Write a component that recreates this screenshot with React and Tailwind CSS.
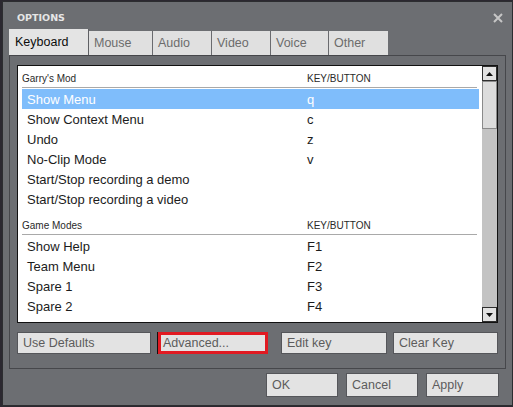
const font = { fontFamily: '"Liberation Sans", Arial, sans-serif' };

const gmodBinds = [
  ['Show Menu', 'q', true],
  ['Show Context Menu', 'c'],
  ['Undo', 'z'],
  ['No-Clip Mode', 'v'],
  ['Start/Stop recording a demo', ''],
  ['Start/Stop recording a video', ''],
];

const modeBinds = [
  ['Show Help', 'F1'],
  ['Team Menu', 'F2'],
  ['Spare 1', 'F3'],
  ['Spare 2', 'F4'],
];

const tabs = [
  ['Mouse', 'w-[64px] border-r'],
  ['Audio', 'w-[59px] border-r'],
  ['Video', 'w-[59px] border-r'],
  ['Voice', 'w-[58px] border-r'],
  ['Other', 'w-[59px]'],
];

const SectionHeader = ({ label }) => (
  <div className="h-[22px] flex items-end pb-[2px] border-b border-[#a9a9a9] mr-[2px] text-[10px] leading-[12px] text-[#2a2a2a]">
    <span className="w-[285px]">{label}</span>
    <span>KEY/BUTTON</span>
  </div>
);

const BindRow = ({ name, keyName, selected }) => (
  <div
    className={`h-[20px] flex items-center pl-[5px] pt-[1px] text-[13px] ${
      selected ? 'bg-[#7fbdfb] text-white' : 'text-[#1c1c1c]'
    }`}
  >
    <span className="w-[280px]">{name}</span>
    <span>{keyName}</span>
  </div>
);

const Arrow = ({ down }) => (
  <svg width="7" height="4" viewBox="0 0 7 4">
    <path d={down ? 'M0 0H7L3.5 4Z' : 'M0 4H7L3.5 0Z'} fill="#111" />
  </svg>
);

const Button = ({ children, className = '' }) => (
  <div
    className={`flex items-center pl-[5px] bg-[#e3e3e3] border border-[#55565a] text-[#5c5c5c] text-[12.5px] ${className}`}
  >
    {children}
  </div>
);

export default function App() {
  return (
    <div className="w-[513px] h-[407px] bg-[#2b2830] overflow-hidden" style={font}>
      <div className="ml-[2px] mt-[1px] w-[511px] h-[405px] border border-[#2c2d30] bg-[#6c6e72] flex flex-col px-[6px]">
        <div className="h-[27px] flex items-start">
          <span
            className="pl-[8px] pt-[10px] text-[9.5px] leading-[11px] font-bold text-[#e6e6e6]"
            style={{ fontFamily: '"DejaVu Sans", sans-serif' }}
          >
            OPTIONS
          </span>
          <svg className="ml-auto mr-[3px] mt-[11px]" width="10" height="10" viewBox="0 0 10 10">
            <path d="M1 1L9 9M9 1L1 9" stroke="#c6c6c6" strokeWidth="2" />
          </svg>
        </div>

        <div className="h-[26px] flex items-end">
          <div className="w-[80px] h-[26px] flex items-center pl-[6px] bg-[#e4e4e4] border-r border-[#5f6064] text-[12.5px] text-[#0c0c0c]">
            Keyboard
          </div>
          {tabs.map(([label, cls]) => (
            <div
              key={label}
              className={`h-[24px] flex items-center pl-[5px] bg-[#e0e0e0] border-[#6a6b6f] text-[12.5px] text-[#6c6c6c] ${cls}`}
            >
              {label}
            </div>
          ))}
        </div>

        <div className="h-[314px] border border-[#46474b] px-[7px] pt-[9px] flex flex-col">
          <div className="h-[258px] border border-[#111] bg-white flex">
            <div className="flex-1 overflow-hidden pl-[4px] pr-[3px]">
              <SectionHeader label="Garry's Mod" />
              <div className="pt-[1px]">
                {gmodBinds.map(([name, k, sel]) => (
                  <BindRow key={name} name={name} keyName={k} selected={sel} />
                ))}
              </div>
              <div className="mt-[4px]">
                <SectionHeader label="Game Modes" />
                <div className="pt-[1px]">
                  {modeBinds.map(([name, k]) => (
                    <BindRow key={name} name={name} keyName={k} />
                  ))}
                </div>
              </div>
            </div>
            <div className="w-[15px] bg-[#c3c3c3] flex flex-col">
              <div className="h-[15px] bg-[#e1e1e1] border border-[#2e2e2e] flex items-center justify-center">
                <Arrow />
              </div>
              <div className="h-[48px] bg-[#dcdcdc] border border-[#8a8a8a]" />
              <div className="mt-auto h-[15px] bg-[#e1e1e1] border border-[#2e2e2e] flex items-center justify-center">
                <Arrow down />
              </div>
            </div>
          </div>

          <div className="mt-[9px] flex h-[22px]">
            <Button className="w-[134px]">Use Defaults</Button>
            <div className="ml-[6px] w-[111px] border-l border-[#111] flex">
              <div className="flex-1 flex items-center pl-[2px] bg-[#e3e3e3] border-[3px] border-[#e11a22] text-[#5c5c5c] text-[12.5px]">
                Advanced...
              </div>
            </div>
            <Button className="ml-[13px] w-[106px]">Edit key</Button>
            <Button className="ml-[6px] w-[105px]">Clear Key</Button>
          </div>
        </div>

        <div className="mt-[4px] flex justify-end gap-[8px] pr-[7px] h-[24px]">
          <Button className="w-[72px]">OK</Button>
          <Button className="w-[72px]">Cancel</Button>
          <Button className="w-[73px]">Apply</Button>
        </div>
      </div>
    </div>
  );
}
